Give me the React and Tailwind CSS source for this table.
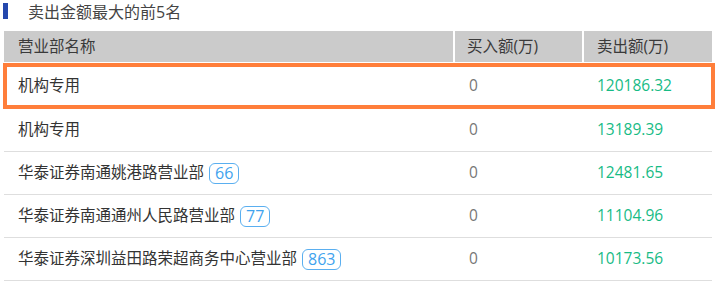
import React from "react";

const rows = [
  { name: "机构专用", badge: null, buy: "0", sell: "120186.32", hl: true },
  { name: "机构专用", badge: null, buy: "0", sell: "13189.39" },
  { name: "华泰证券南通姚港路营业部", badge: "66", buy: "0", sell: "12481.65" },
  { name: "华泰证券南通通州人民路营业部", badge: "77", buy: "0", sell: "11104.96" },
  { name: "华泰证券深圳益田路荣超商务中心营业部", badge: "863", buy: "0", sell: "10173.56" },
];

function Cells({ r }) {
  return (
    <>
      <div className="w-[451px] flex items-center pl-[14px] text-[#333]">
        <span>{r.name}</span>
        {r.badge && (
          <span className="ml-[5px] h-[21px] px-[5px] flex items-center rounded-[6px] border border-[#5aaff0] text-[#3fa3ee] text-[16px] leading-none">
            {r.badge}
          </span>
        )}
      </div>
      <div className="w-[129px] flex items-center pl-[14px] text-[#777]">{r.buy}</div>
      <div className="w-[128px] flex items-center pl-[13px] text-[#17bb85]">{r.sell}</div>
    </>
  );
}

export default function App() {
  return (
    <div
      className="w-[718px] h-[285px] bg-white overflow-hidden text-[15.5px]"
      style={{ fontFamily: '"Open Sans", "Noto Sans CJK SC", sans-serif' }}
    >
      <div className="flex items-center pt-[2px] h-[19px]">
        <div className="ml-[3px] w-[5px] h-[16px] bg-[#2548ad]" />
        <div className="ml-[20px] text-[16px] leading-[16px] text-[#444] mt-[2px]">卖出金额最大的前5名</div>
      </div>
      <div className="ml-[4px] w-[708px] mt-[12px]">
        <div className="h-[31px] bg-[#cbcbcb] flex text-[#3a3a3a]">
          <div className="w-[451px] flex items-center pl-[14px] border-r-2 border-white">营业部名称</div>
          <div className="w-[129px] flex items-center pl-[12px] border-r-2 border-white">买入额(万)</div>
          <div className="w-[128px] flex items-center pl-[13px]">卖出额(万)</div>
        </div>
        {rows.map((r, i) =>
          r.hl ? (
            <div key={i} className="relative h-[46px] mt-[1px] flex">
              <Cells r={r} />
              <div className="absolute left-[-1px] right-[-3px] top-0 bottom-0 border-[4px] border-[#ff7e3a] pointer-events-none" />
            </div>
          ) : (
            <div key={i} className="h-[43px] flex border-b border-[#dedede]">
              <Cells r={r} />
            </div>
          )
        )}
      </div>
    </div>
  );
}
